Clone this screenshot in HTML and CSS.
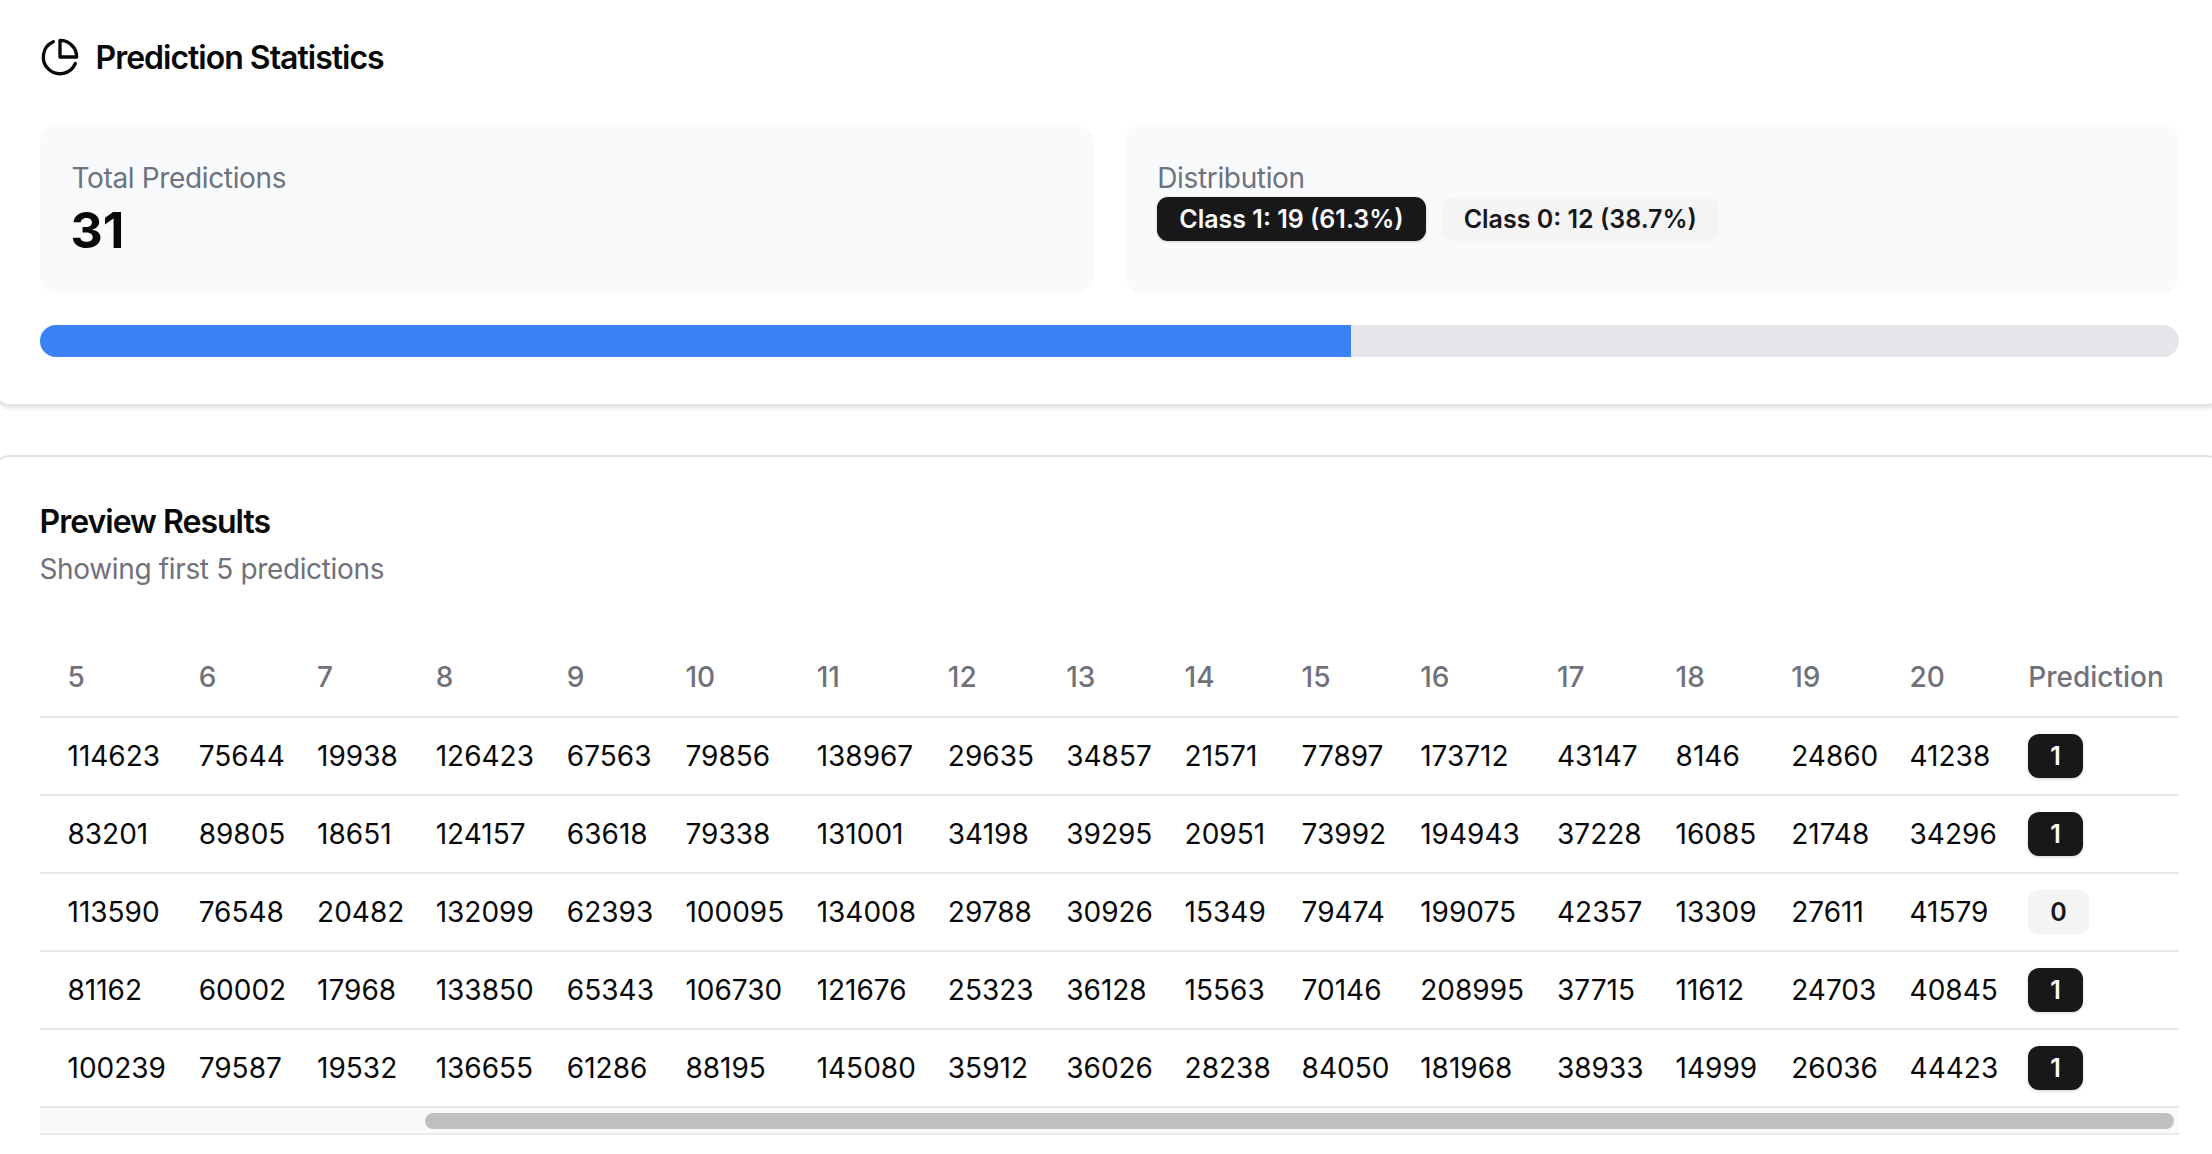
FILE: index.html
```html
<!DOCTYPE html>
<html lang="en">

<head>
    <meta charset="UTF-8">
    <title>Prediction Statistics</title>
    <link rel="stylesheet" href="styles.css">
</head>

<body>
    <div class="page">
        <section class="card card-stats">
            <div class="card-title">
                <svg class="title-icon" viewBox="0 0 24 24" fill="none" stroke="currentColor" stroke-width="2"
                    stroke-linecap="round" stroke-linejoin="round">
                    <path d="M21.21 15.89A10 10 0 1 1 8 2.83"></path>
                    <path d="M22 12A10 10 0 0 0 12 2v10z"></path>
                </svg>
                <h2>Prediction Statistics</h2>
            </div>
            <div class="panels">
                <div class="panel">
                    <div class="panel-label">Total Predictions</div>
                    <div class="panel-value">31</div>
                </div>
                <div class="panel">
                    <div class="panel-label">Distribution</div>
                    <div class="badges">
                        <span class="badge badge-dark">Class 1: 19 (61.3%)</span>
                        <span class="badge badge-light">Class 0: 12 (38.7%)</span>
                    </div>
                </div>
            </div>
            <div class="progress">
                <div class="progress-fill"></div>
            </div>
        </section>

        <section class="card card-preview">
            <h2 class="preview-title">Preview Results</h2>
            <p class="preview-sub">Showing first 5 predictions</p>
            <table class="results">
                <colgroup>
                    <col class="w-131"><col class="w-118"><col class="w-119"><col class="w-131">
                    <col class="w-119"><col class="w-131"><col class="w-131"><col class="w-118">
                    <col class="w-118"><col class="w-117"><col class="w-119"><col class="w-137">
                    <col class="w-119"><col class="w-116"><col class="w-118"><col class="w-119">
                    <col class="w-rest">
                </colgroup>
                <thead>
                    <tr>
                        <th>5</th><th>6</th><th>7</th><th>8</th><th>9</th><th>10</th><th>11</th><th>12</th>
                        <th>13</th><th>14</th><th>15</th><th>16</th><th>17</th><th>18</th><th>19</th><th>20</th>
                        <th>Prediction</th>
                    </tr>
                </thead>
                <tbody>
                    <tr>
                        <td>114623</td><td>75644</td><td>19938</td><td>126423</td><td>67563</td><td>79856</td>
                        <td>138967</td><td>29635</td><td>34857</td><td>21571</td><td>77897</td><td>173712</td>
                        <td>43147</td><td>8146</td><td>24860</td><td>41238</td>
                        <td><span class="badge badge-dark badge-cell">1</span></td>
                    </tr>
                    <tr>
                        <td>83201</td><td>89805</td><td>18651</td><td>124157</td><td>63618</td><td>79338</td>
                        <td>131001</td><td>34198</td><td>39295</td><td>20951</td><td>73992</td><td>194943</td>
                        <td>37228</td><td>16085</td><td>21748</td><td>34296</td>
                        <td><span class="badge badge-dark badge-cell">1</span></td>
                    </tr>
                    <tr>
                        <td>113590</td><td>76548</td><td>20482</td><td>132099</td><td>62393</td><td>100095</td>
                        <td>134008</td><td>29788</td><td>30926</td><td>15349</td><td>79474</td><td>199075</td>
                        <td>42357</td><td>13309</td><td>27611</td><td>41579</td>
                        <td><span class="badge badge-light badge-cell">0</span></td>
                    </tr>
                    <tr>
                        <td>81162</td><td>60002</td><td>17968</td><td>133850</td><td>65343</td><td>106730</td>
                        <td>121676</td><td>25323</td><td>36128</td><td>15563</td><td>70146</td><td>208995</td>
                        <td>37715</td><td>11612</td><td>24703</td><td>40845</td>
                        <td><span class="badge badge-dark badge-cell">1</span></td>
                    </tr>
                    <tr>
                        <td>100239</td><td>79587</td><td>19532</td><td>136655</td><td>61286</td><td>88195</td>
                        <td>145080</td><td>35912</td><td>36026</td><td>28238</td><td>84050</td><td>181968</td>
                        <td>38933</td><td>14999</td><td>26036</td><td>44423</td>
                        <td><span class="badge badge-dark badge-cell">1</span></td>
                    </tr>
                </tbody>
            </table>
            <div class="scrollbar">
                <div class="scrollbar-thumb"></div>
            </div>
        </section>
    </div>
</body>

</html>
```

FILE: styles.css
```css
html,
body {
    margin: 0;
    height: 100%;
    overflow: hidden;
    background: #fff;
}

body {
    font-family: Inter, "Noto Sans", sans-serif;
    color: #09090b;
}

/* cards run a little past the window edge, as in the cropped shot */
.page {
    margin: 0 -12px 0 -7.5px;
    display: flex;
    flex-direction: column;
    gap: 49px;
}

.card {
    background: #fff;
    border: 2px solid #e4e4e7;
    border-radius: 17px;
}

.card-stats {
    border-top: 0;
    border-radius: 0 0 17px 17px;
    padding: 37px 43px 47px 45px;
    box-shadow: 0 2px 4px rgba(0, 0, 0, 0.12);
}

.card-preview {
    border-bottom: 0;
    border-radius: 17px 17px 0 0;
    padding: 47px 43px 0 45px;
}

.card-title {
    display: flex;
    align-items: center;
    gap: 16px;
    margin-bottom: 48px;
}

.title-icon {
    width: 40px;
    height: 40px;
    flex: none;
}

h2 {
    margin: 0;
    font-size: 32px;
    line-height: 35px;
    font-weight: 600;
    letter-spacing: -1px;
}

.panels {
    display: grid;
    grid-template-columns: 1fr 1fr;
    gap: 32px;
}

.panel {
    background: #f9fafb;
    border-radius: 17px;
    padding: 34px 32px;
    height: 168px;
    box-sizing: border-box;
}

.panel-label {
    font-size: 28px;
    line-height: 38px;
    letter-spacing: -0.35px;
    color: #6b7280;
}

.panel-value {
    margin-left: -1px;
    font-size: 50px;
    line-height: 66px;
    font-weight: 700;
}

.badges {
    display: flex;
    gap: 16px;
}

.badge {
    display: inline-flex;
    align-items: center;
    box-sizing: border-box;
    height: 44px;
    padding: 0 22px;
    border-radius: 11px;
    font-size: 25px;
    font-weight: 600;
    white-space: nowrap;
}

.badge-dark {
    background: #18181b;
    color: #fafafa;
    box-shadow: 0 1px 3px rgba(0, 0, 0, 0.18);
}

.badge-light {
    background: #f4f4f5;
    color: #18181b;
}

.progress {
    margin-top: 32px;
    height: 32px;
    background: #e5e7eb;
    border-radius: 16px;
    overflow: hidden;
}

.progress-fill {
    width: 61.3%;
    height: 100%;
    background: #3b82f6;
}

.preview-sub {
    margin: 10px 0 49px;
    font-size: 28px;
    line-height: 40px;
    letter-spacing: -0.35px;
    color: #71717a;
}

.results {
    width: 100%;
    table-layout: fixed;
    border-collapse: collapse;
    font-size: 28px;
}

.w-116 { width: 115.6px; }
.w-117 { width: 117px; }
.w-118 { width: 118.4px; }
.w-119 { width: 118.6px; }
.w-131 { width: 131.2px; }
.w-137 { width: 136.8px; }

.results th,
.results td {
    padding: 0 0 0 28px;
    text-align: left;
    white-space: nowrap;
}

.results th {
    height: 78px;
    font-weight: 500;
    color: #71717a;
}

.results td {
    height: 76px;
}

.results tr {
    border-bottom: 2px solid #e8e8ec;
}

.badge-cell {
    vertical-align: middle;
}

.scrollbar {
    height: 27px;
    box-sizing: border-box;
    padding: 5px 5px 4px 385px;
    background: #fafafa;
    border-bottom: 2px solid #ececef;
}

.scrollbar-thumb {
    height: 16px;
    border-radius: 8px;
    background: #c0c0c0;
}
```
